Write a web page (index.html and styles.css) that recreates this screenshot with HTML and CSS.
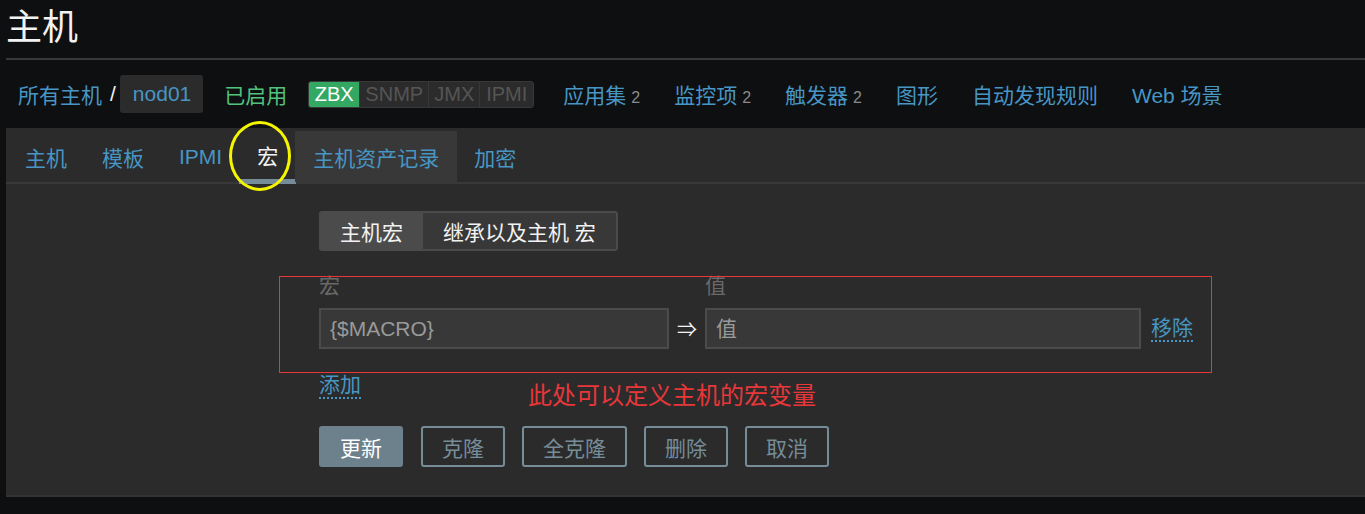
FILE: index.html
```html
<!DOCTYPE html>
<html lang="zh-CN">
<head>
    <meta charset="UTF-8">
    <title>主机</title>
    <link rel="stylesheet" href="styles.css">
</head>
<body>

    <!-- Page header -->
    <div class="header">
        <h1>主机</h1>
    </div>

    <!-- Breadcrumbs and host navigation -->
    <div class="host-nav">
        <a class="crumb" href="#">所有主机</a>
        <span class="crumb-sep">/</span>
        <a class="crumb crumb-current" href="#">nod01</a>
        <span class="status-enabled">已启用</span>
        <div class="status-box">
            <span class="status-item status-on w-zbx">ZBX</span>
            <span class="status-item w-snmp">SNMP</span>
            <span class="status-item w-jmx">JMX</span>
            <span class="status-item w-ipmi">IPMI</span>
        </div>
        <a class="nav-link nav-first" href="#">应用集<sup>2</sup></a>
        <a class="nav-link" href="#">监控项<sup>2</sup></a>
        <a class="nav-link" href="#">触发器<sup>2</sup></a>
        <a class="nav-link" href="#">图形</a>
        <a class="nav-link" href="#">自动发现规则</a>
        <a class="nav-link" href="#">Web 场景</a>
    </div>

    <!-- Host form -->
    <div class="panel">
        <ul class="tabs">
            <li><a href="#">主机</a></li>
            <li><a href="#">模板</a></li>
            <li><a href="#">IPMI</a></li>
            <li class="active"><a href="#">宏</a></li>
            <li class="hover"><a href="#">主机资产记录</a></li>
            <li><a href="#">加密</a></li>
        </ul>

        <div class="form">
            <div class="segmented">
                <span class="segment segment-on">主机宏</span>
                <span class="segment">继承以及主机 宏</span>
            </div>

            <div class="macro-table">
                <div class="macro-head">
                    <span class="col-macro">宏</span>
                    <span class="col-value">值</span>
                </div>
                <div class="macro-row">
                    <input class="input input-macro" type="text" placeholder="{$MACRO}">
                    <span class="arrow">&rArr;</span>
                    <input class="input input-value" type="text" placeholder="值">
                    <a class="dotted" href="#">移除</a>
                </div>
                <div class="macro-add">
                    <a class="dotted" href="#">添加</a>
                </div>
            </div>

            <div class="buttons">
                <button class="btn btn-main">更新</button>
                <button class="btn">克隆</button>
                <button class="btn">全克隆</button>
                <button class="btn">删除</button>
                <button class="btn">取消</button>
            </div>
        </div>

        <!-- annotations drawn on the screenshot -->
        <div class="mark-circle"></div>
        <div class="mark-box"></div>
        <div class="mark-note">此处可以定义主机的宏变量</div>
    </div>

</body>
</html>
```

FILE: styles.css
```css
body { margin: 0; background: #0e0f11; color: #f2f2f2; font-family: "Liberation Sans", Arial, "Noto Sans CJK SC", sans-serif; font-size: 21px; }
a { color: #4796c4; text-decoration: none; }

.header { margin-left: 6px; border-bottom: 2px solid #383838; height: 58px; }
.header h1 { margin: 0; font-size: 36px; font-weight: normal; line-height: 56px; color: #f2f2f2; }

.host-nav { display: flex; align-items: center; height: 38px; margin: 15px 0 15px 6px; }
.crumb { display: flex; align-items: center; height: 38px; padding: 0 8px 0 12px; }
.crumb-sep { color: #f2f2f2; margin: 0 2px 0 0; }
.crumb-current { background: #2b2b2b; border-radius: 3px; padding: 0 12px 0 13px; margin-left: 2px; }
.status-enabled { color: #52c27f; margin-left: 21px; }
.status-box { display: flex; margin-left: 21px; border: 1px solid #383838; border-radius: 3px; background: #383838; gap: 1px; }
.status-item { display: flex; align-items: center; justify-content: center; height: 25px; background: #2b2b2b; color: #555; font-size: 20px; }
.status-on { background: #32a863; color: #fff; border-radius: 2px 0 0 2px; }
.w-zbx { width: 50px; }
.w-snmp { width: 68px; }
.w-jmx { width: 50px; }
.w-ipmi { width: 53px; }
.nav-link { margin-left: 34px; white-space: nowrap; }
.nav-first { margin-left: 29px; }
.nav-link sup { vertical-align: baseline; font-size: 16px; color: #8a8a8a; margin-left: 5px; }

.panel { position: relative; margin-left: 6px; background: #2b2b2b; border-bottom: 2px solid #323232; }

.tabs { display: flex; list-style: none; margin: 0; padding: 3px 0 0 1px; border-bottom: 2px solid #383838; }
.tabs li { height: 51px; margin: 0 -1px -2px 0; }
.tabs li a { display: flex; align-items: center; height: 51px; padding: 0 18px; }
.tabs li.hover { background: #383838; }
.tabs li.active { height: 53px; }
.tabs li.active a { color: #f2f2f2; height: 48px; border-bottom: 5px solid #768d99; }

.form { padding: 27px 0 28px 313px; }

.segmented { display: inline-flex; border: 2px solid #4b4b4b; border-radius: 3px; background: #383838; }
.segment { display: flex; align-items: center; height: 36px; padding: 0 20px; color: #f2f2f2; }
.segment-on { background: #4b4b4b; padding: 0 20px 0 19px; }

.macro-table { margin-top: 18px; }
.macro-head { display: flex; height: 30px; align-items: center; color: #696969; }
.col-macro { width: 386px; }
.macro-row { display: flex; align-items: center; margin-top: 9px; }
.input { box-sizing: border-box; height: 41px; border: 2px solid #4b4b4b; background: #383838; color: #f2f2f2; font-family: inherit; font-size: 21px; padding: 0 9px; outline: none; }
.input::placeholder { color: #9a9a9a; }
.input-macro { width: 350px; }
.input-value { width: 436px; }
.arrow { width: 36px; text-align: center; color: #f2f2f2; font-size: 20px; }
.dotted { border-bottom: 2px dotted #4796c4; line-height: 24px; }
.macro-row .dotted { margin-left: 10px; }
.macro-add { display: flex; height: 32px; align-items: flex-end; margin-top: 18px; }

.buttons { display: flex; gap: 17px; margin-top: 27px; }
.btn { box-sizing: border-box; height: 41px; padding: 0 19px; border: 2px solid #768d99; border-radius: 3px; background: transparent; color: #768d99; font-family: inherit; font-size: 21px; cursor: pointer; }
.btn-main { background: #6d818c; border-color: #6d818c; color: #fff; margin-right: 1px; }

.mark-circle { position: absolute; left: 223px; top: -7px; width: 62px; height: 70px; box-sizing: border-box; border: 3px solid #f5f500; border-radius: 50%; }
.mark-box { position: absolute; left: 273px; top: 148px; width: 933px; height: 97px; box-sizing: border-box; border: 1px solid #e8373a; }
.mark-note { position: absolute; left: 522px; top: 252px; color: #e8373a; font-size: 24px; line-height: 32px; }
```
